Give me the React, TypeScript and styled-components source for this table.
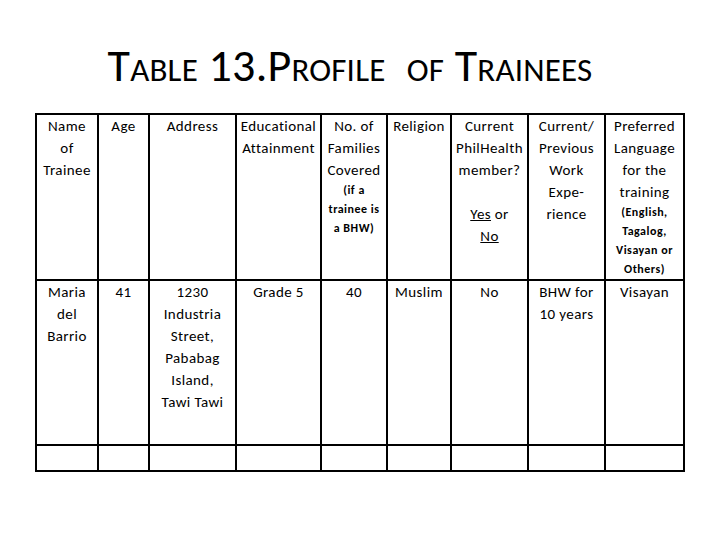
import React from 'react'
import styled, { createGlobalStyle } from 'styled-components'

const fontStack = "Carlito, Calibri, Lato, 'Open Sans', sans-serif"

const GlobalStyle = createGlobalStyle`
  html, body {
    margin: 0;
    padding: 0;
    background: #ffffff;
  }
  body {
    font-family: ${fontStack};
    color: #000000;
  }
`

const colWidths = [62, 51, 87, 85, 66, 64, 77, 77, 79]

const Page = styled.div`
  width: 720px;
  height: 540px;
  background: #ffffff;
  display: flex;
  flex-direction: column;
  align-items: center;
`

const Title = styled.h1`
  margin: 0;
  padding: 40px 20px 0 0;
  height: 113px;
  box-sizing: border-box;
  font-family: ${fontStack};
  font-weight: normal;
  font-size: 46px;
  line-height: 50px;
  white-space: pre;
  letter-spacing: 0.2px;
`

const Caps = styled.span`
  font-size: 33px;
`

const Table = styled.table`
  border-collapse: collapse;
  table-layout: fixed;
  width: 650px;
`

const Col = styled.col<{ $w: number }>`
  width: ${(p) => p.$w}px;
`

const Row = styled.tr<{ $h: number }>`
  height: ${(p) => p.$h}px;
`

const Cell = styled.td`
  border: 2px solid #000000;
  padding: 0;
  vertical-align: top;
  text-align: center;
  font-family: ${fontStack};
  font-size: 15px;
  line-height: 22px;
  letter-spacing: 0.4px;
`

const Line = styled.div`
  display: block;
  white-space: nowrap;
  min-height: 22px;
`

const SmallLine = styled.div`
  display: block;
  white-space: nowrap;
  font-size: 12px;
  font-weight: bold;
  line-height: 19px;
  letter-spacing: 0.5px;
`

const Under = styled.span`
  text-decoration: underline;
`

const lines = (items: string[]) => items.map((t, i) => <Line key={i}>{t}</Line>)
const small = (items: string[]) => items.map((t, i) => <SmallLine key={i}>{t}</SmallLine>)

export default function App() {
  return (
    <Page>
      <GlobalStyle />
      <Title>
        T<Caps>ABLE</Caps> 13.P<Caps>ROFILE</Caps>{'  '}
        <Caps>OF</Caps> T<Caps>RAINEES</Caps>
      </Title>
      <Table>
        <colgroup>
          {colWidths.map((w, i) => (
            <Col key={i} $w={w} />
          ))}
        </colgroup>
        <tbody>
          <Row $h={165}>
            <Cell>{lines(['Name', 'of', 'Trainee'])}</Cell>
            <Cell>{lines(['Age'])}</Cell>
            <Cell>{lines(['Address'])}</Cell>
            <Cell>{lines(['Educational', 'Attainment'])}</Cell>
            <Cell>
              {lines(['No. of', 'Families', 'Covered'])}
              {small(['(if a', 'trainee is', 'a BHW)'])}
            </Cell>
            <Cell>{lines(['Religion'])}</Cell>
            <Cell>
              {lines(['Current', 'PhilHealth', 'member?', ''])}
              <Line>
                <Under>Yes</Under> or
              </Line>
              <Line>
                <Under>No</Under>
              </Line>
            </Cell>
            <Cell>{lines(['Current/', 'Previous', 'Work', 'Expe-', 'rience'])}</Cell>
            <Cell>
              {lines(['Preferred', 'Language', 'for the', 'training'])}
              {small(['(English,', 'Tagalog,', 'Visayan or', 'Others)'])}
            </Cell>
          </Row>
          <Row $h={165}>
            <Cell>{lines(['Maria', 'del', 'Barrio'])}</Cell>
            <Cell>{lines(['41'])}</Cell>
            <Cell>
              {lines(['1230', 'Industria', 'Street,', 'Pababag', 'Island,', 'Tawi Tawi'])}
            </Cell>
            <Cell>{lines(['Grade 5'])}</Cell>
            <Cell>{lines(['40'])}</Cell>
            <Cell>{lines(['Muslim'])}</Cell>
            <Cell>{lines(['No'])}</Cell>
            <Cell>{lines(['BHW for', '10 years'])}</Cell>
            <Cell>{lines(['Visayan'])}</Cell>
          </Row>
          <Row $h={26}>
            {colWidths.map((_, i) => (
              <Cell key={i} />
            ))}
          </Row>
        </tbody>
      </Table>
    </Page>
  )
}
